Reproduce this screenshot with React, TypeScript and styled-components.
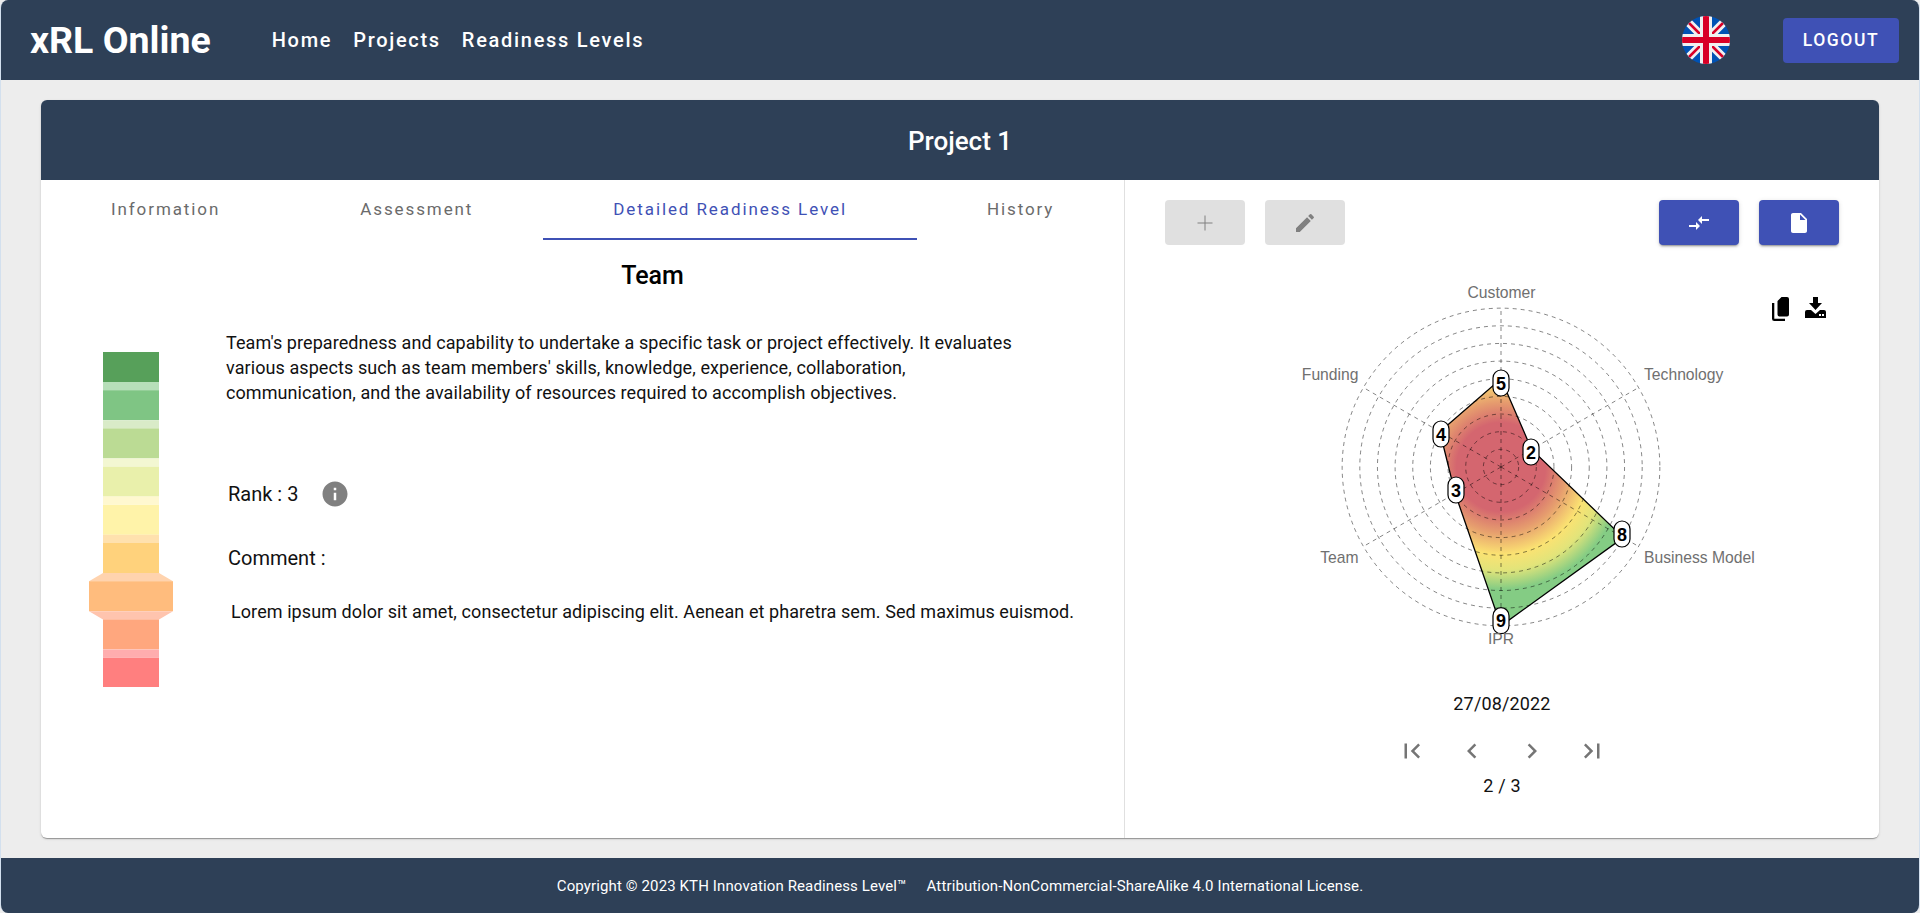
import React from 'react';
import styled, { createGlobalStyle } from 'styled-components';

const NAVY = '#2e4057';
const INDIGO = '#3f51b5';

const GlobalStyle = createGlobalStyle`
    html, body {
        margin: 0;
        padding: 0;
        background: #ededed;
        font-family: Roboto, "Liberation Sans", sans-serif;
    }
`;

const Page = styled.div`
    display: flex;
    flex-direction: column;
    height: 913px;
    box-sizing: border-box;
    border-left: 1px solid #d3e0ee;
    border-right: 1px solid #d3e0ee;
    border-radius: 8px;
    overflow: hidden;
    background: #ededed;
`;

const NavBar = styled.header`
    display: flex;
    align-items: center;
    height: 80px;
    flex-shrink: 0;
    padding: 0 20px 0 29px;
    background: ${NAVY};
    color: #fff;
`;

const Logo = styled.div`
    font-size: 37.5px;
    font-weight: 700;
    margin-right: 61px;
`;

const NavLink = styled.a`
    font-size: 20px;
    font-weight: 500;
    letter-spacing: 1.7px;
    margin-right: 21px;
`;

const Spacer = styled.div`
    flex-grow: 1;
`;

const FlagHolder = styled.div`
    display: flex;
    width: 48px;
    height: 48px;
    margin-right: 53px;
`;

const LogoutButton = styled.button`
    width: 116px;
    height: 45px;
    border: 0;
    border-radius: 4px;
    background: ${INDIGO};
    color: #fff;
    font-family: inherit;
    font-size: 17.5px;
    font-weight: 500;
    letter-spacing: 1.6px;
`;

const Main = styled.main`
    flex-grow: 1;
    display: flex;
    padding: 20px 40px;
    min-height: 0;
`;

const Card = styled.section`
    flex-grow: 1;
    display: flex;
    flex-direction: column;
    border-radius: 6px;
    background: #fff;
    overflow: hidden;
    box-shadow: 0 2px 1px -1px rgba(0, 0, 0, 0.2), 0 1px 1px 0 rgba(0, 0, 0, 0.14), 0 1px 3px 0 rgba(0, 0, 0, 0.12);
`;

const CardHeader = styled.div`
    display: flex;
    align-items: center;
    justify-content: center;
    height: 80px;
    padding-top: 1px;
    box-sizing: border-box;
    flex-shrink: 0;
    background: ${NAVY};
    color: #fff;
    font-size: 26px;
    font-weight: 500;
`;

const CardBody = styled.div`
    flex-grow: 1;
    display: flex;
    min-height: 0;
`;

const LeftPanel = styled.div`
    width: 1083px;
    flex-shrink: 0;
    border-right: 1px solid #e0e0e0;
`;

const Tabs = styled.nav`
    display: flex;
    height: 60px;
`;

const Tab = styled.div<{ $active?: boolean }>`
    display: flex;
    align-items: center;
    padding: 0 70px;
    box-sizing: border-box;
    font-size: 17px;
    letter-spacing: 1.9px;
    white-space: nowrap;
    color: ${p => (p.$active ? INDIGO : '#6b6b6b')};
    border-bottom: 2px solid ${p => (p.$active ? INDIGO : 'transparent')};
`;

const Title = styled.h2`
    margin: 21px 0 0;
    padding-left: 140px;
    text-align: center;
    font-size: 25px;
    font-weight: 500;
    line-height: 30px;
    color: #000;
`;

const Detail = styled.div`
    display: flex;
    margin-top: 39px;
`;

const Ladder = styled.svg`
    display: block;
    width: 84px;
    height: 335px;
    margin: 22px 0 0 48px;
    flex-shrink: 0;
`;

const DetailText = styled.div`
    margin-left: 53px;
    width: 850px;
`;

const Description = styled.p`
    margin: 0;
    width: 800px;
    font-size: 18px;
    line-height: 25px;
    letter-spacing: 0.08px;
    color: #111;
`;

const RankRow = styled.div`
    display: flex;
    align-items: center;
    margin: 74px 0 0 2px;
    height: 30px;
    font-size: 20px;
    color: #111;
`;

const InfoIcon = styled.svg`
    width: 30px;
    height: 30px;
    margin-left: 22px;
    fill: #808080;
`;

const CommentLabel = styled.div`
    margin: 36px 0 0 2px;
    font-size: 20px;
    line-height: 26px;
    color: #111;
`;

const CommentBody = styled.p`
    margin: 29px 0 0 5px;
    font-size: 18px;
    line-height: 24px;
    letter-spacing: 0.08px;
    white-space: nowrap;
    color: #111;
`;

const RightPanel = styled.div`
    position: relative;
    flex-grow: 1;
    display: flex;
    flex-direction: column;
    align-items: center;
`;

const Toolbar = styled.div`
    align-self: stretch;
    display: flex;
    gap: 20px;
    padding: 20px 40px 0;
`;

const ToolButton = styled.button<{ $enabled?: boolean }>`
    display: flex;
    align-items: center;
    justify-content: center;
    width: 80px;
    height: 45px;
    padding: 0;
    border: 0;
    border-radius: 4px;
    background: ${p => (p.$enabled ? INDIGO : '#e0e0e0')};
    box-shadow: ${p => (p.$enabled ? '0 3px 1px -2px rgba(0,0,0,.2), 0 2px 2px 0 rgba(0,0,0,.14), 0 1px 5px 0 rgba(0,0,0,.12)' : 'none')};

    svg {
        width: 24px;
        height: 24px;
        fill: ${p => (p.$enabled ? '#fff' : '#808080')};
    }
`;

const ChartActions = styled.div`
    position: absolute;
    top: 117px;
    right: 53px;
    display: flex;
    align-items: flex-start;
    gap: 16px;

    svg {
        display: block;
        fill: #000;
    }
`;

const Chart = styled.svg`
    display: block;
    width: 520px;
    height: 370px;
    margin-top: 29px;
    flex-shrink: 0;
    font-family: "Liberation Sans", Arial, sans-serif;
`;

const DateLabel = styled.div`
    margin-top: 50px;
    font-size: 18px;
    line-height: 20px;
    letter-spacing: 0.15px;
    color: #111;
`;

const Pager = styled.div`
    display: flex;
    gap: 30px;
    margin-top: 22px;

    svg {
        display: block;
        width: 30px;
        height: 30px;
        fill: #757575;
    }
`;

const PageCount = styled(DateLabel)`
    margin-top: 10px;
`;

const Footer = styled.footer`
    display: flex;
    align-items: center;
    justify-content: center;
    gap: 20px;
    height: 55px;
    flex-shrink: 0;
    background: ${NAVY};
    color: #fff;
    font-size: 15px;
    letter-spacing: 0.12px;
    white-space: pre;
`;

const ladderLevels = [
    { fill: '#57a05a', gap: '#b7dfb9' },
    { fill: '#7fc584', gap: '#d9ebc8' },
    { fill: '#bbdb94', gap: '#f3f7d2' },
    { fill: '#e9f0ab', gap: '#fff8d0' },
    { fill: '#fff3a9', gap: '#ffe1ae' },
    { fill: '#ffd27c', gap: '#ffd3ae' },
    { fill: '#ffbc7d', gap: '#ffc4ae' },
    { fill: '#ffa77e', gap: '#ffadae' },
    { fill: '#ff7f7f', gap: '' },
];

function ReadinessLadder() {
    const pitch = 38.2;
    const active = 6;
    return (
        <Ladder viewBox="0 0 84 335">
            {ladderLevels.map((level, i) => {
                const y = i * pitch;
                const x = (n: number) => (n === active ? 0 : 14);
                const w = (n: number) => (n === active ? 84 : 56);
                return (
                    <g key={i}>
                        <rect x={x(i)} y={y} width={w(i)} height={30} fill={level.fill} />
                        {level.gap && (
                            <polygon
                                fill={level.gap}
                                points={`${x(i)},${y + 30} ${x(i) + w(i)},${y + 30} ${x(i + 1) + w(i + 1)},${y + pitch} ${x(i + 1)},${y + pitch}`}
                            />
                        )}
                    </g>
                );
            })}
        </Ladder>
    );
}

const CX = 240;
const CY = 167;
const STEP = 17.65;
const axes = [0, 60, 120, 180, 240, 300];

function polar(angle: number, r: number) {
    const a = (angle * Math.PI) / 180;
    return [CX + r * Math.sin(a), CY - r * Math.cos(a)];
}

const values = [5, 2, 8, 9, 3, 4];

const pills = [
    { label: '5', x: 240, y: 83 },
    { label: '2', x: 270, y: 152 },
    { label: '8', x: 361, y: 234 },
    { label: '9', x: 240, y: 320.7 },
    { label: '3', x: 195, y: 190 },
    { label: '4', x: 180, y: 134 },
];

const chartLabels = [
    { text: 'Customer', x: 240.5, y: -2, anchor: 'middle' },
    { text: 'Technology', x: 383, y: 80, anchor: 'start' },
    { text: 'Business Model', x: 383, y: 263, anchor: 'start' },
    { text: 'IPR', x: 240, y: 345, anchor: 'middle' },
    { text: 'Team', x: 97.5, y: 263, anchor: 'end' },
    { text: 'Funding', x: 97.5, y: 80, anchor: 'end' },
];

function RadarChart() {
    const shape = values.map((v, i) => polar(axes[i], v * STEP).join(',')).join(' ');
    return (
        <Chart viewBox="-19 -26 520 370">
            <defs>
                <radialGradient id="heat" gradientUnits="userSpaceOnUse" cx={CX} cy={CY} r={158.8}>
                    <stop offset="0.28" stopColor="#d4666f" />
                    <stop offset="0.41" stopColor="#e69d6e" />
                    <stop offset="0.55" stopColor="#fbe272" />
                    <stop offset="0.65" stopColor="#e2e47a" />
                    <stop offset="0.77" stopColor="#84cc84" />
                    <stop offset="1" stopColor="#84cc84" />
                </radialGradient>
            </defs>
            <polygon points={shape} fill="url(#heat)" />
            {Array.from({ length: 9 }, (_, i) => (
                <circle key={i} cx={CX} cy={CY} r={(i + 1) * STEP} fill="none" stroke="rgba(0,0,0,0.48)" strokeWidth={1} strokeDasharray="4 4" />
            ))}
            {axes.map(a => {
                const [x, y] = polar(a, 9 * STEP);
                return <line key={a} x1={CX} y1={CY} x2={x} y2={y} stroke="rgba(0,0,0,0.48)" strokeDasharray="4 4" />;
            })}
            <polygon points={shape} fill="none" stroke="#000" strokeWidth={1.3} />
            {pills.map(p => (
                <g key={p.label}>
                    <rect x={p.x - 8} y={p.y - 13} width={16} height={26} rx={8} fill="#fff" stroke="#000" strokeWidth={1.2} />
                    <text x={p.x} y={p.y + 6.5} textAnchor="middle" fontSize={18} fontWeight={700} fill="#000">{p.label}</text>
                </g>
            ))}
            {chartLabels.map(l => (
                <text key={l.text} x={l.x} y={l.y} textAnchor={l.anchor as 'start'} fontSize={15.7} fill="#707070">{l.text}</text>
            ))}
        </Chart>
    );
}

function UkFlag() {
    return (
        <svg width="48" height="48" viewBox="0 0 48 48">
            <defs>
                <clipPath id="flag-circle"><circle cx="24" cy="24" r="24" /></clipPath>
            </defs>
            <g clipPath="url(#flag-circle)">
                <rect width="48" height="48" fill="#0052b4" />
                <path d="M0 0 48 48M48 0 0 48" stroke="#f0f0f0" strokeWidth="8" />
                <path d="M2 2 18 18M46 46 30 30M44 4 30 18M4 44 18 30" stroke="#d80027" strokeWidth="2.5" />
                <path d="M24 0V48M0 24H48" stroke="#f0f0f0" strokeWidth="12" />
                <path d="M24 0V48M0 24H48" stroke="#d80027" strokeWidth="6" />
            </g>
        </svg>
    );
}

export default function App() {
    return (
        <Page>
            <GlobalStyle />
            <NavBar>
                <Logo>xRL Online</Logo>
                <NavLink>Home</NavLink>
                <NavLink>Projects</NavLink>
                <NavLink>Readiness Levels</NavLink>
                <Spacer />
                <FlagHolder><UkFlag /></FlagHolder>
                <LogoutButton>LOGOUT</LogoutButton>
            </NavBar>
            <Main>
                <Card>
                    <CardHeader>Project 1</CardHeader>
                    <CardBody>
                        <LeftPanel>
                            <Tabs>
                                <Tab>Information</Tab>
                                <Tab>Assessment</Tab>
                                <Tab $active>Detailed Readiness Level</Tab>
                                <Tab>History</Tab>
                            </Tabs>
                            <Title>Team</Title>
                            <Detail>
                                <ReadinessLadder />
                                <DetailText>
                                    <Description>
                                        Team's preparedness and capability to undertake a specific task or project effectively. It evaluates various aspects such as team members' skills, knowledge, experience, collaboration, communication, and the availability of resources required to accomplish objectives.
                                    </Description>
                                    <RankRow>
                                        Rank : 3
                                        <InfoIcon viewBox="0 0 24 24">
                                            <path d="M12 2C6.48 2 2 6.48 2 12s4.48 10 10 10 10-4.48 10-10S17.52 2 12 2zm1 15h-2v-6h2v6zm0-8h-2V7h2v2z" />
                                        </InfoIcon>
                                    </RankRow>
                                    <CommentLabel>Comment :</CommentLabel>
                                    <CommentBody>Lorem ipsum dolor sit amet, consectetur adipiscing elit. Aenean et pharetra sem. Sed maximus euismod.</CommentBody>
                                </DetailText>
                            </Detail>
                        </LeftPanel>
                        <RightPanel>
                            <Toolbar>
                                <ToolButton><svg viewBox="0 0 24 24"><path d="M19.5 12.5h-7v7h-1v-7h-7v-1h7v-7h1v7h7v1z" /></svg></ToolButton>
                                <ToolButton><svg viewBox="0 0 24 24"><path d="M3 17.25V21h3.75L17.81 9.94l-3.75-3.75L3 17.25zM20.71 7.04c.39-.39.39-1.02 0-1.41l-2.34-2.34a.9959.9959 0 0 0-1.41 0l-1.83 1.83 3.75 3.75 1.83-1.83z" /></svg></ToolButton>
                                <Spacer />
                                <ToolButton $enabled><svg viewBox="0 0 24 24"><path d="M9.01 14H2v2h7.01v3L13 15l-3.99-4v3zm5.98-1v-3H22V8h-7.01V5L11 9l3.99 4z" /></svg></ToolButton>
                                <ToolButton $enabled><svg viewBox="0 0 24 24"><path d="M6 2c-1.1 0-1.99.9-1.99 2L4 20c0 1.1.89 2 1.99 2H18c1.1 0 2-.9 2-2V8l-6-6H6zm7 7V3.5L18.5 9H13z" /></svg></ToolButton>
                            </Toolbar>
                            <ChartActions>
                                <svg width="17" height="24" viewBox="0 0 17 24"><path d="M0 6h2.3v15.7H13V24H2.3A2.3 2.3 0 0 1 0 21.7zM9.5 0H15a2 2 0 0 1 2 2v15.5a2 2 0 0 1-2 2H7.5a2 2 0 0 1-2-2V4z" /></svg>
                                <svg width="21" height="21" viewBox="0 0 21 21"><path fillRule="evenodd" d="M8 0h5v6h4l-6.5 7L4 6h4zM0 15a2 2 0 0 1 2-2h4l4.5 4 4.5-4h4a2 2 0 0 1 2 2v6H0zM14 17h2v2h-2zM17 17h2v2h-2z" /></svg>
                            </ChartActions>
                            <RadarChart />
                            <DateLabel>27/08/2022</DateLabel>
                            <Pager>
                                <svg viewBox="0 0 24 24"><path d="M18.41 16.59 13.82 12l4.59-4.59L17 6l-6 6 6 6zM6 6h2v12H6z" /></svg>
                                <svg viewBox="0 0 24 24"><path d="M15.41 7.41 14 6l-6 6 6 6 1.41-1.41L10.83 12z" /></svg>
                                <svg viewBox="0 0 24 24"><path d="M10 6 8.59 7.41 13.17 12l-4.58 4.59L10 18l6-6z" /></svg>
                                <svg viewBox="0 0 24 24"><path d="M5.59 7.41 10.18 12l-4.59 4.59L7 18l6-6-6-6zM16 6h2v12h-2z" /></svg>
                            </Pager>
                            <PageCount>2 / 3</PageCount>
                        </RightPanel>
                    </CardBody>
                </Card>
            </Main>
            <Footer>
                <span>Copyright © 2023 KTH Innovation Readiness Level™</span>
                <span>Attribution-NonCommercial-ShareAlike 4.0 International License.</span>
            </Footer>
        </Page>
    );
}
